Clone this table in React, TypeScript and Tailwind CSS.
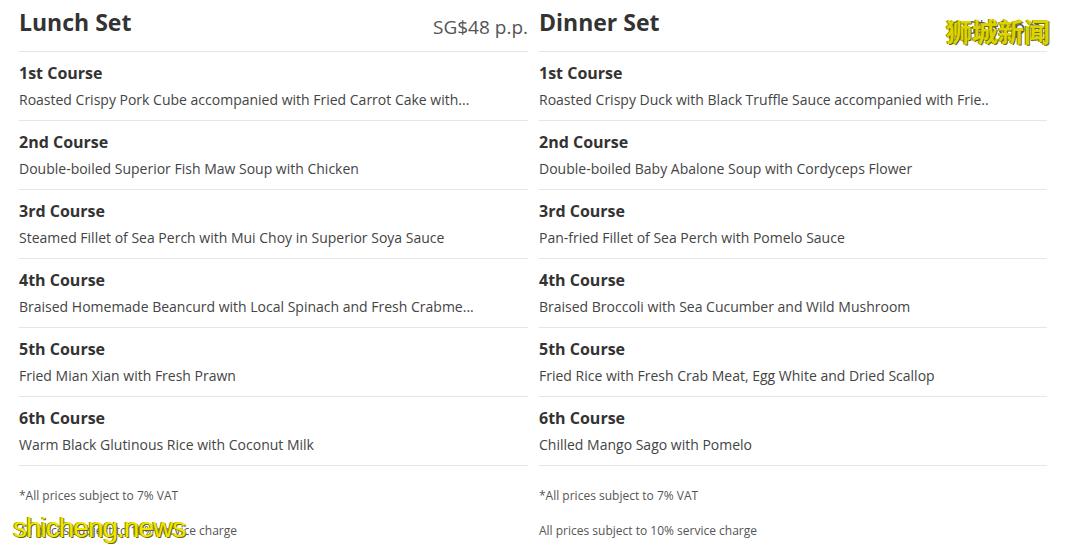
const lunch = [
  { course: "1st Course", dish: "Roasted Crispy Pork Cube accompanied with Fried Carrot Cake with..." },
  { course: "2nd Course", dish: "Double-boiled Superior Fish Maw Soup with Chicken" },
  { course: "3rd Course", dish: "Steamed Fillet of Sea Perch with Mui Choy in Superior Soya Sauce" },
  { course: "4th Course", dish: "Braised Homemade Beancurd with Local Spinach and Fresh Crabme..." },
  { course: "5th Course", dish: "Fried Mian Xian with Fresh Prawn" },
  { course: "6th Course", dish: "Warm Black Glutinous Rice with Coconut Milk" },
];

const dinner = [
  { course: "1st Course", dish: "Roasted Crispy Duck with Black Truffle Sauce accompanied with Frie.." },
  { course: "2nd Course", dish: "Double-boiled Baby Abalone Soup with Cordyceps Flower" },
  { course: "3rd Course", dish: "Pan-fried Fillet of Sea Perch with Pomelo Sauce" },
  { course: "4th Course", dish: "Braised Broccoli with Sea Cucumber and Wild Mushroom" },
  { course: "5th Course", dish: "Fried Rice with Fresh Crab Meat, Egg White and Dried Scallop" },
  { course: "6th Course", dish: "Chilled Mango Sago with Pomelo" },
];

function SetMenu({ title, price, items }: { title: string; price: string; items: { course: string; dish: string }[] }) {
  return (
    <div className="flex flex-col">
      <div className="flex h-[52px] items-baseline justify-between border-b border-[#e6e6e6] pt-[6px]">
        <h2 className="text-[23px] font-bold leading-[32px] text-[#333]">{title}</h2>
        <span className="translate-y-[3px] text-[19px] leading-[32px] text-[#555]">{price}</span>
      </div>
      {items.map((it) => (
        <div key={it.course} className="h-[69px] border-b border-[#e6e6e6] pt-[10px]">
          <p className="text-[16px] font-bold leading-[22px] text-[#333]">{it.course}</p>
          <p className="mt-[5px] whitespace-nowrap text-[14px] leading-[22px] text-[#444]">{it.dish}</p>
        </div>
      ))}
      <p className="mt-[22px] text-[12px] leading-[16px] text-[#555]">*All prices subject to 7% VAT</p>
      <p className="mt-[19px] text-[12px] leading-[16px] text-[#555]">All prices subject to 10% service charge</p>
    </div>
  );
}

export default function App() {
  return (
    <div className="relative h-[550px] w-[1066px] overflow-hidden bg-white font-['Open_Sans','Noto_Sans',sans-serif]">
      <div className="grid grid-cols-[509px_508px] gap-[11px] pl-[19px]">
        <SetMenu title="Lunch Set" price="SG$48 p.p." items={lunch} />
        <SetMenu title="Dinner Set" price="SG$68 p.p." items={dinner} />
      </div>

      {/* watermarks */}
      <span className="absolute left-[946px] top-[13px] font-['Noto_Sans_CJK_SC',sans-serif] text-[26px] font-bold leading-[36px] text-[#f2e600]/85 [text-shadow:1px_1px_0_#6b6b00,-1px_0_0_#8a8a00]">
        狮城新闻
      </span>
      <span className="absolute left-[13px] top-[510px] font-['Liberation_Sans',sans-serif] text-[28px] leading-[36px] tracking-[-1px] text-[#f2e600] [text-shadow:1px_1px_0_#6b6b00,-1px_0_0_#8a8a00]">
        shicheng.news
      </span>
    </div>
  );
}
